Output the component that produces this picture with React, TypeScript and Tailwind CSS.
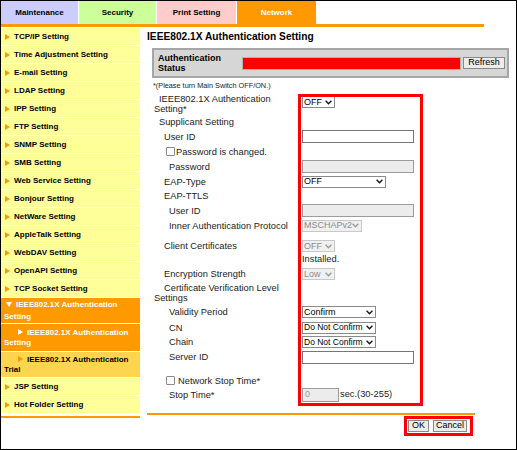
import React from "react";

const navItems = [
  "TCP/IP Setting",
  "Time Adjustment Setting",
  "E-mail Setting",
  "LDAP Setting",
  "IPP Setting",
  "FTP Setting",
  "SNMP Setting",
  "SMB Setting",
  "Web Service Setting",
  "Bonjour Setting",
  "NetWare Setting",
  "AppleTalk Setting",
  "WebDAV Setting",
  "OpenAPI Setting",
  "TCP Socket Setting",
];

function Tri({ color = "#ff9900" }: { color?: string }) {
  return (
    <svg width="5" height="6" viewBox="0 0 5 6" className="inline-block align-[0px]">
      <polygon points="0,0 5,3 0,6" fill={color} />
    </svg>
  );
}

function Chevron({ disabled }: { disabled?: boolean }) {
  return (
    <svg width="7" height="5" viewBox="0 0 7 5" className="shrink-0">
      <path d="M0.6 0.8 L3.5 3.8 L6.4 0.8" fill="none" stroke={disabled ? "#9a9a9a" : "#111"} strokeWidth="1.3" />
    </svg>
  );
}

function Sel({ text, className, disabled, small }: { text: string; className: string; disabled?: boolean; small?: boolean }) {
  return (
    <div
      className={
        "flex h-[12px] items-center justify-between overflow-hidden whitespace-nowrap border pl-[1px] pr-[2px] leading-none " +
        (small ? "text-[8.5px] " : "text-[9px] ") +
        (disabled ? "border-[#c8c8c8] bg-[#f0f0f0] text-[#8c8c8c] " : "border-[#8a8a8a] bg-white text-black ") +
        className
      }
    >
      <span>{text}</span>
      <Chevron disabled={disabled} />
    </div>
  );
}

function Field({ disabled }: { disabled?: boolean }) {
  return (
    <div
      className={
        "h-[13px] w-[112px] border " +
        (disabled ? "border-[#9c9c9c] bg-[#ececec]" : "border-[#767676] bg-white")
      }
    />
  );
}

function Box() {
  return <span className="inline-block h-[9px] w-[9px] shrink-0 rounded-[1px] border border-[#8a8a8a] bg-white" />;
}

function Row({ h, label, pad, children }: { h: string; label?: React.ReactNode; pad: string; children?: React.ReactNode }) {
  return (
    <div className={"flex items-center " + h}>
      <div className={"w-[149px] whitespace-nowrap text-[9.3px] leading-[10px] text-[#1c1c1c] " + pad}>{label}</div>
      <div className="flex items-center">{children}</div>
    </div>
  );
}

export default function App() {
  return (
    <div className="relative h-[450px] w-[517px] overflow-hidden border border-black bg-white font-['Liberation_Sans',Arial,sans-serif] text-black">
      {/* tabs */}
      <div className="flex h-[23px] gap-px text-[8px] font-bold">
        <div className="flex w-[77px] items-center justify-center bg-[#ccccff]">Maintenance</div>
        <div className="flex w-[77px] items-center justify-center bg-[#ccff99]">Security</div>
        <div className="flex w-[79px] items-center justify-center bg-[#ffcccc]">Print Setting</div>
        <div className="flex w-[79px] items-center justify-center bg-[#ff9900] text-white">Network</div>
      </div>
      <div className="h-[3px] w-[483px] bg-[#ff9900]" />

      <div className="mt-px flex">
        {/* sidebar */}
        <div className="w-[139px] text-[8px] font-bold">
          {navItems.map((t) => (
            <div key={t} className="flex h-[18px] items-center border-b border-[#fffff2] bg-[#ffff99] pl-[4px]">
              <Tri />
              <span className="ml-[4px]">{t}</span>
            </div>
          ))}
          <div className="h-[26px] border-b border-[#fffff2] bg-[#ff9900] pt-[1px] pl-[3px] indent-[2px] leading-[12px] text-white">
            <svg width="6" height="5" viewBox="0 0 6 5" className="mr-[4px] inline-block align-[0px]">
              <polygon points="0,0 6,0 3,5" fill="#fff" />
            </svg>
            IEEE802.1X Authentication Setting
          </div>
          <div className="h-[28px] border-b border-[#fffff2] bg-[#ff9900] pt-[4px] pl-[3px] indent-[14px] leading-[10px] text-white">
            <Tri color="#fff" />
            <span className="ml-[4px]">IEEE802.1X Authentication Setting</span>
          </div>
          <div className="h-[26px] border-b border-[#fffff2] bg-[#ffd54f] pt-[3px] pl-[3px] indent-[14px] leading-[9.5px]">
            <Tri />
            <span className="ml-[4px]">IEEE802.1X Authentication Trial</span>
          </div>
          {["JSP Setting", "Hot Folder Setting"].map((t) => (
            <div key={t} className="flex h-[18px] items-center border-b border-[#fffff2] bg-[#ffff99] pl-[4px]">
              <Tri />
              <span className="ml-[4px]">{t}</span>
            </div>
          ))}
          <div className="mt-[2px] h-[2px] bg-[#ff9900]" />
        </div>

        {/* main */}
        <div className="ml-[7px] w-[367px] pt-[3px]">
          <div className="text-[10.2px] font-bold leading-[12px]">IEEE802.1X Authentication Setting</div>

          <div className="ml-[5px] mt-[5px] flex h-[30px] w-[357px] items-center border-2 border-[#a6a6a6] bg-[#d6d6d6] pl-[4px]">
            <div className="w-[84px] text-[9px] font-bold leading-[10px]">
              Authentication
              <br />
              Status
            </div>
            <div className="h-[13px] w-[219px] border border-[#b0b0b0] bg-[#ff0000]" />
            <div className="ml-[2px] flex h-[12px] w-[42px] items-center justify-center border border-[#8a8a8a] bg-[#ececec] text-[9px]">
              Refresh
            </div>
          </div>

          <div className="ml-[6px] mt-[3px] text-[7.3px] leading-[9px] text-[#222]">*(Please turn Main Switch OFF/ON.)</div>

          <div className="ml-[6px] mt-[3px]">
            <div className="flex h-[22px] items-start pt-[1px]">
              <div className="w-[149px] pl-[1px] pr-[4px] indent-[5px] text-[9.3px] leading-[10px] text-[#1c1c1c]">
                IEEE802.1X Authentication Setting*
              </div>
              <div className="pt-[2px]">
                <Sel text="OFF" className="w-[33px]" />
              </div>
            </div>
            <Row h="h-[14px]" pad="pl-[6px]" label="Supplicant Setting" />
            <Row h="h-[15px]" pad="pl-[11px]" label="User ID">
              <Field />
            </Row>
            <Row
              h="h-[15px]"
              pad="pl-[13px]"
              label={
                <span className="flex items-center gap-[1px]">
                  <Box />
                  <span>Password is changed.</span>
                </span>
              }
            />
            <Row h="h-[15px]" pad="pl-[16px]" label="Password">
              <Field disabled />
            </Row>
            <Row h="h-[15px]" pad="pl-[11px]" label="EAP-Type">
              <Sel text="OFF" className="w-[84px]" />
            </Row>
            <Row h="h-[14px]" pad="pl-[11px]" label="EAP-TTLS" />
            <Row h="h-[15px]" pad="pl-[16px]" label="User ID">
              <Field disabled />
            </Row>
            <Row h="h-[15px]" pad="pl-[16px]" label="Inner Authentication Protocol">
              <Sel text="MSCHAPv2" className="w-[60px]" disabled />
            </Row>
            <div className="h-[6px]" />
            <Row h="h-[14px]" pad="pl-[11px]" label="Client Certificates">
              <Sel text="OFF" className="w-[33px]" disabled />
            </Row>
            <Row h="h-[14px]" pad="pl-[11px]">
              <span className="text-[9.3px] text-[#1c1c1c]">Installed.</span>
            </Row>
            <Row h="h-[14px]" pad="pl-[11px]" label="Encryption Strength">
              <Sel text="Low" className="w-[33px]" disabled />
            </Row>
            <div className="flex h-[23px] items-center">
              <div className="w-[149px] pl-[1px] pr-[4px] indent-[10px] text-[9.3px] leading-[10px] text-[#1c1c1c]">
                Certificate Verification Level Settings
              </div>
            </div>
            <Row h="h-[16px]" pad="pl-[16px]" label="Validity Period">
              <Sel text="Confirm" className="w-[74px]" />
            </Row>
            <Row h="h-[15px]" pad="pl-[16px]" label="CN">
              <Sel text="Do Not Confirm" className="w-[74px]" small />
            </Row>
            <Row h="h-[14px]" pad="pl-[16px]" label="Chain">
              <Sel text="Do Not Confirm" className="w-[74px]" small />
            </Row>
            <Row h="h-[16px]" pad="pl-[16px]" label="Server ID">
              <Field />
            </Row>
            <div className="h-[8px]" />
            <Row
              h="h-[15px]"
              pad="pl-[13px]"
              label={
                <span className="flex items-center gap-[3px]">
                  <Box />
                  <span>Network Stop Time*</span>
                </span>
              }
            />
            <Row h="h-[14px]" pad="pl-[16px]" label="Stop Time*">
              <div className="flex h-[14px] w-[37px] items-center border border-[#9c9c9c] bg-[#ececec] pl-[2px] text-[9px] text-[#9a9a9a]">
                0
              </div>
              <span className="ml-[1px] text-[9.3px] text-[#1c1c1c]">sec.(30-255)</span>
            </Row>
          </div>

          <div className="mt-[11px] h-[2px] w-[328px] bg-[#ff9900]" />
          <div className="mt-[5px] flex w-[328px] justify-end gap-[4px] pr-[8px]">
            <div className="flex h-[12px] w-[21px] items-center justify-center border border-[#8a8a8a] bg-[#ececec] text-[9px]">
              OK
            </div>
            <div className="flex h-[12px] w-[34px] items-center justify-center border border-[#8a8a8a] bg-[#ececec] text-[9px]">
              Cancel
            </div>
          </div>
        </div>
      </div>

      {/* red annotation boxes */}
      <div className="absolute left-[297px] top-[93px] h-[312px] w-[125px] border-[3px] border-[#ff0000]" />
      <div className="absolute left-[403px] top-[415px] h-[20px] w-[69px] border-[3px] border-[#ff0000]" />
    </div>
  );
}
